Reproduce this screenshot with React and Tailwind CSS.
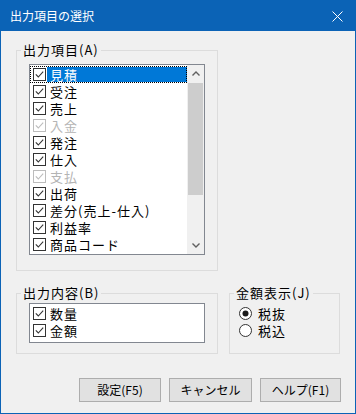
import React from 'react';

const FONT = { fontFamily: '"Noto Sans CJK JP", "Noto Sans", sans-serif' };

const items = [
  { label: '見積', selected: true },
  { label: '受注' },
  { label: '売上' },
  { label: '入金', disabled: true },
  { label: '発注' },
  { label: '仕入' },
  { label: '支払', disabled: true },
  { label: '出荷' },
  { label: '差分(売上-仕入)' },
  { label: '利益率' },
  { label: '商品コード' },
];

function Check({ disabled }) {
  const c = disabled ? '#bcbcbc' : '#333333';
  return (
    <svg width="13" height="13" viewBox="0 0 13 13" className="shrink-0">
      <rect x="0.5" y="0.5" width="12" height="12" fill="#ffffff" stroke={c} />
      <path d="M2.8 6.4 L5.3 9 L10.2 3.6" fill="none" stroke={c} strokeWidth="1.1" />
    </svg>
  );
}

function Radio({ on }) {
  return (
    <svg width="13" height="13" viewBox="0 0 13 13" className="shrink-0">
      <circle cx="6.5" cy="6.5" r="6" fill="#ffffff" stroke="#333333" />
      {on && <circle cx="6.5" cy="6.5" r="3" fill="#1a1a1a" />}
    </svg>
  );
}

function Row({ label, selected, disabled }) {
  return (
    <div
      className={`h-[17px] flex items-center pl-[3px] ${
        selected ? 'outline-1 outline-dotted outline-black -outline-offset-1' : ''
      }`}
    >
      <Check disabled={disabled} />
      <span
        className={`ml-[1px] flex-1 h-[15px] pl-[3px] text-[13px] leading-[15px] tracking-[1px] ${
          selected ? 'bg-[#0078d7] text-white' : disabled ? 'text-[#b4b4b4]' : 'text-black'
        }`}
      >
        {label}
      </span>
    </div>
  );
}

function Group({ title, className, children }) {
  return (
    <fieldset className={`border border-[#dcdcdc] p-0 m-0 min-w-0 ${className}`}>
      <legend className="ml-[4px] px-[2px] text-[13px] leading-4 tracking-[1px] text-black">{title}</legend>
      {children}
    </fieldset>
  );
}

function Button({ children, className }) {
  return (
    <button className={`h-[24px] bg-[#e1e1e1] border border-[#adadad] text-[12px] text-black ${className}`}>
      {children}
    </button>
  );
}

export default function App() {
  return (
    <div
      className="w-[356px] h-[414px] border border-[#0b63b6] bg-[#f0f0f0] flex flex-col"
      style={FONT}
    >
      {/* Title bar */}
      <div className="h-[30px] bg-[#0b63b6] flex items-center justify-between pl-[9px] pr-[12px] shrink-0">
        <span className="text-[12px] text-white">出力項目の選択</span>
        <svg width="11" height="11" viewBox="0 0 11 11">
          <path d="M0.5 0.5 L10.5 10.5 M10.5 0.5 L0.5 10.5" stroke="#ffffff" strokeWidth="1" />
        </svg>
      </div>

      <div className="pl-[15px] pt-[11px]">
        {/* 出力項目 */}
        <Group title="出力項目(A)" className="w-[202px] h-[229px]">
          <div className="mt-[6px] ml-[12px] w-[176px] h-[191px] border border-[#828790] bg-white flex">
            <div className="flex-1 flex flex-col pt-[1px]">
              {items.map((it) => (
                <Row key={it.label} {...it} />
              ))}
            </div>
            <div className="w-[17px] bg-[#f0f0f0] flex flex-col">
              <div className="h-[17px] flex items-center justify-center">
                <svg width="8" height="5" viewBox="0 0 8 5">
                  <path d="M0.5 4.5 L4 1 L7.5 4.5" fill="none" stroke="#606060" strokeWidth="1.4" />
                </svg>
              </div>
              <div className="flex-1 pt-[1px]">
                <div className="ml-[1px] w-[15px] h-[112px] bg-[#cdcdcd]" />
              </div>
              <div className="h-[17px] flex items-center justify-center">
                <svg width="8" height="5" viewBox="0 0 8 5">
                  <path d="M0.5 0.5 L4 4 L7.5 0.5" fill="none" stroke="#606060" strokeWidth="1.4" />
                </svg>
              </div>
            </div>
          </div>
        </Group>

        <div className="mt-[14px] flex items-start gap-[11px]">
          {/* 出力内容 */}
          <Group title="出力内容(B)" className="w-[202px] h-[69px]">
            <div className="mt-[2px] ml-[12px] w-[176px] h-[40px] border border-[#828790] bg-white pt-[1px]">
              <Row label="数量" />
              <Row label="金額" />
            </div>
          </Group>

          {/* 金額表示 */}
          <Group title="金額表示(J)" className="w-[111px] h-[69px]">
            <div className="mt-[4px] ml-[9px] flex flex-col">
              <div className="h-[17px] flex items-center gap-[6px]">
                <Radio on />
                <span className="text-[13px] leading-[15px] tracking-[1px]">税抜</span>
              </div>
              <div className="h-[17px] flex items-center gap-[6px]">
                <Radio />
                <span className="text-[13px] leading-[15px] tracking-[1px]">税込</span>
              </div>
            </div>
          </Group>
        </div>
      </div>

      {/* Buttons */}
      <div className="mt-[24px] flex justify-end gap-[8px] pr-[14px]">
        <Button className="w-[82px]">設定(F5)</Button>
        <Button className="w-[83px]">キャンセル</Button>
        <Button className="w-[81px]">ヘルプ(F1)</Button>
      </div>
    </div>
  );
}
